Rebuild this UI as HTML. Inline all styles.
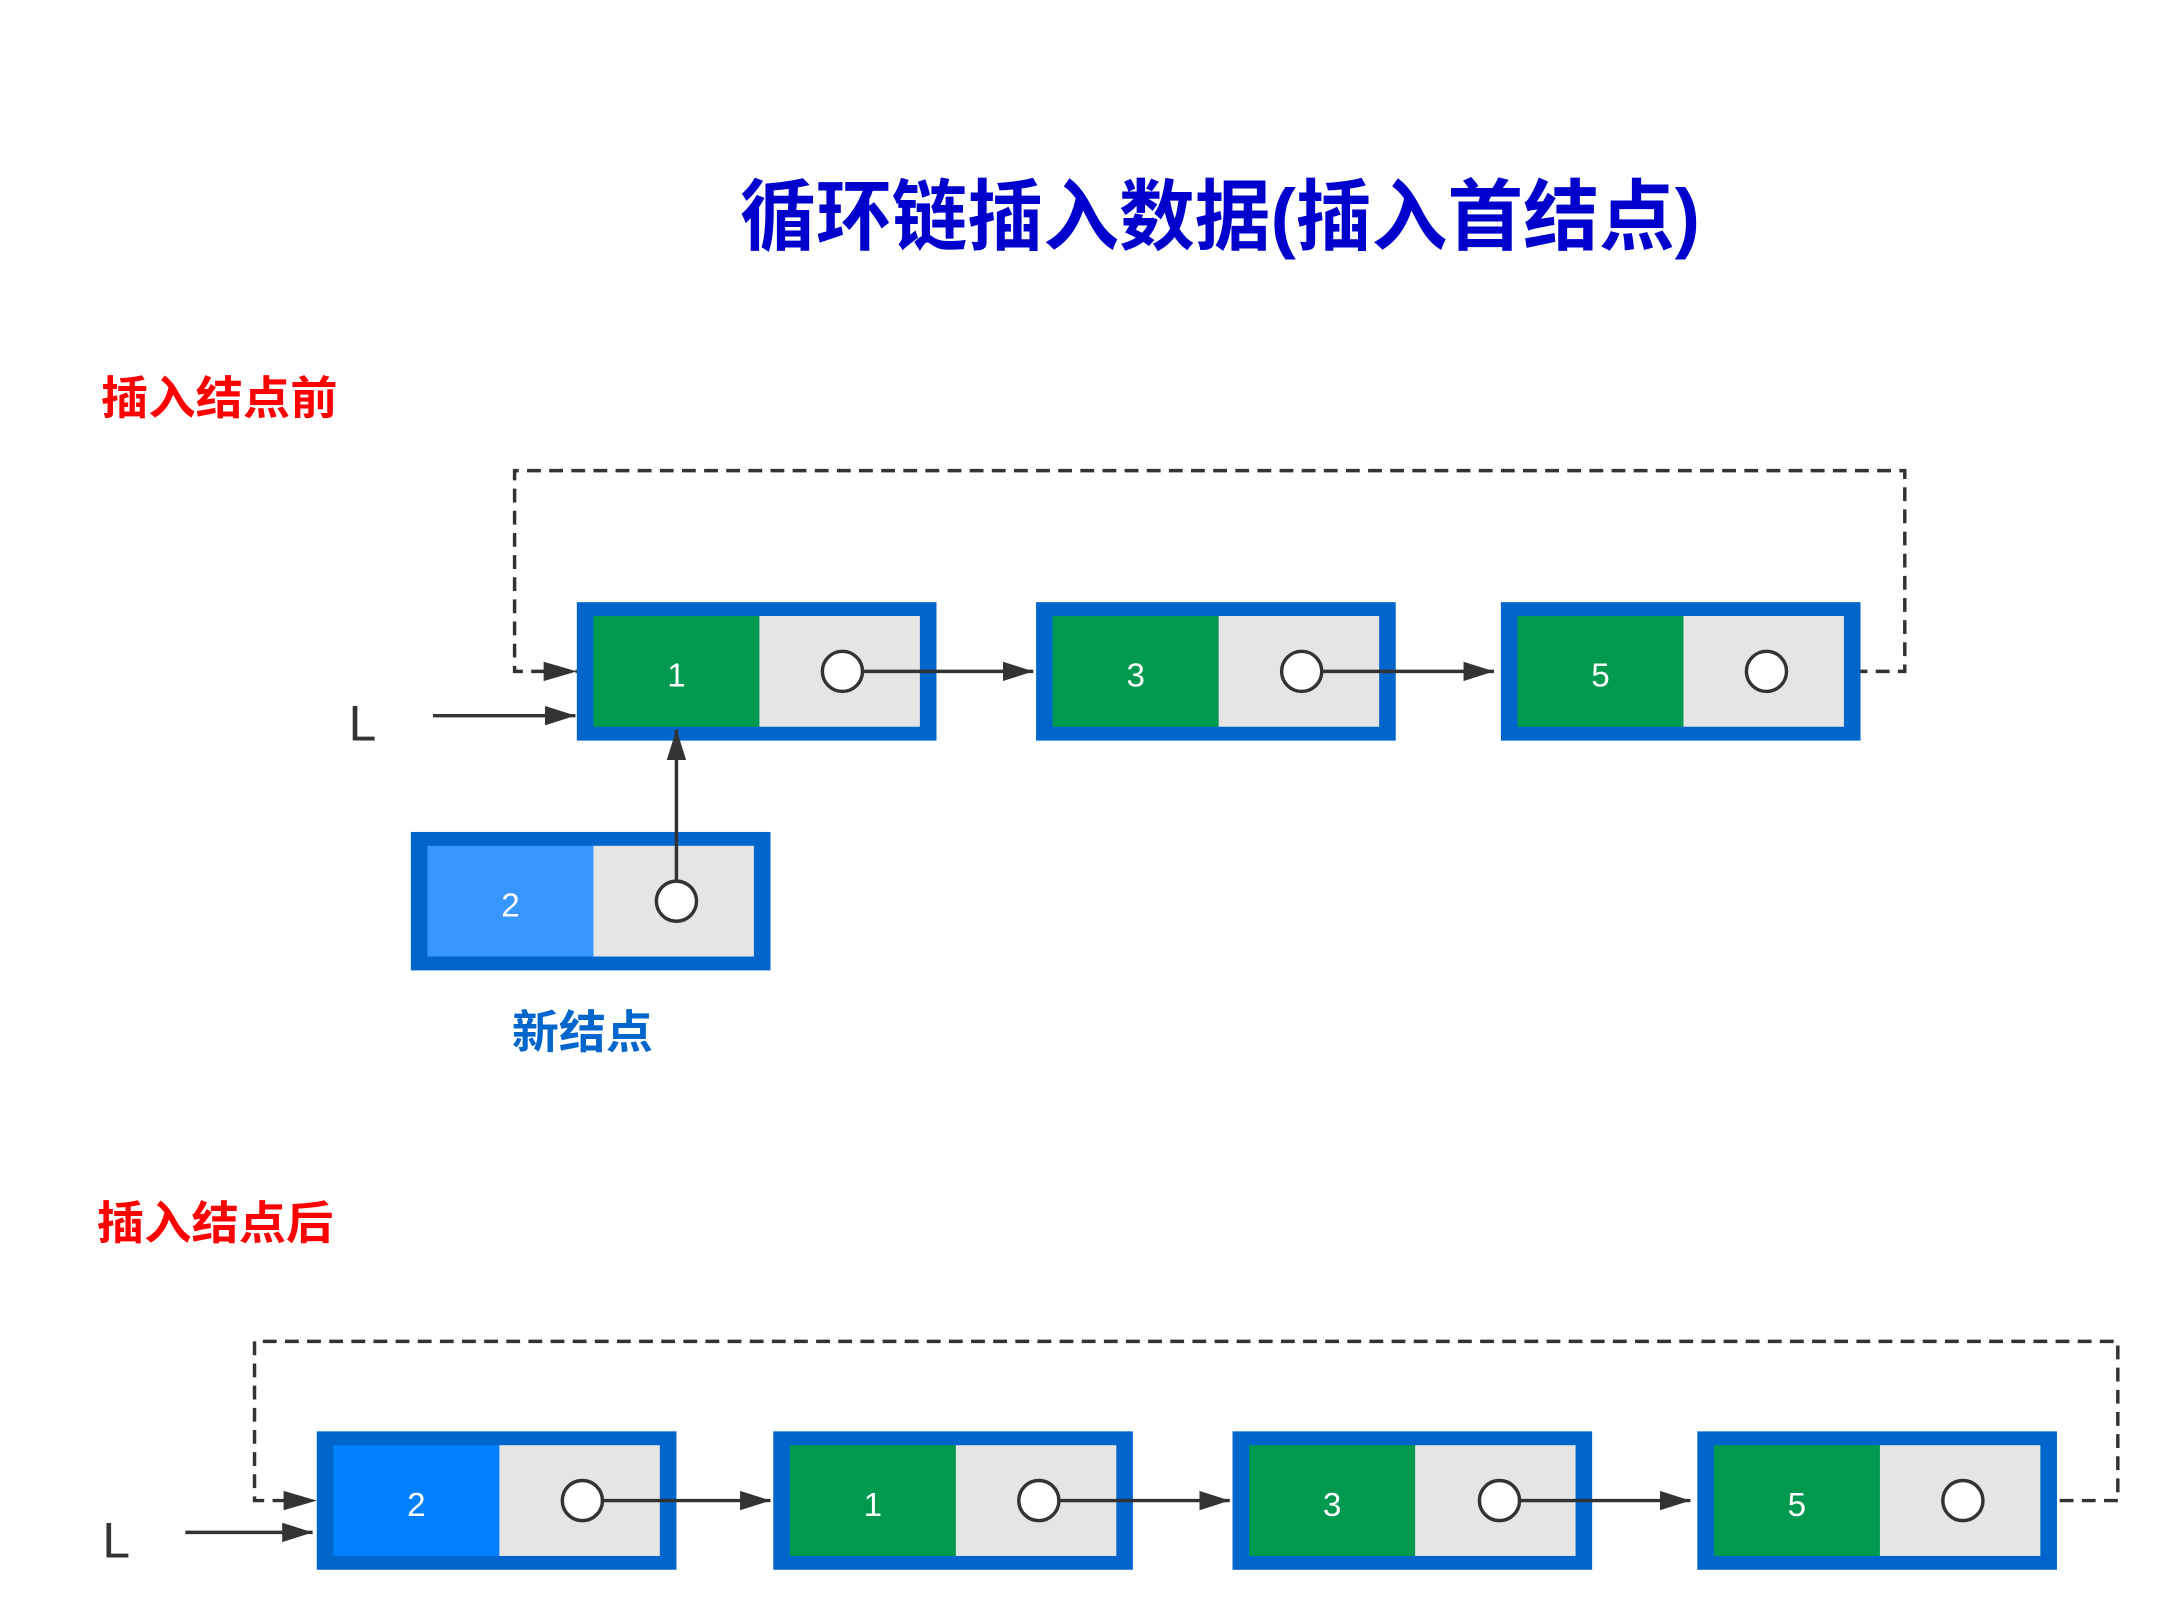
<!DOCTYPE html>
<html><head><meta charset="utf-8"><style>
html,body{margin:0;padding:0;background:#fff;}
svg{display:block;}
text{font-family:"Liberation Sans","Noto Sans CJK SC",sans-serif;}
</style></head><body>
<svg width="2169" height="1621" viewBox="0 0 1568 1171" preserveAspectRatio="none" xmlns="http://www.w3.org/2000/svg">
<defs>
<marker id="ab" markerWidth="22" markerHeight="14" refX="22" refY="7" orient="auto" markerUnits="userSpaceOnUse">
<path d="M0,0 L22,7 L0,14 Z" fill="#333"/></marker>
</defs>
<rect width="1568" height="1171" fill="#fff"/>
<text x="535" y="176" font-size="56" font-weight="bold" fill="#0000cc" textLength="694" lengthAdjust="spacingAndGlyphs" font-family="Noto Sans CJK SC, sans-serif">循环链插入数据(插入首结点)</text>
<text x="73" y="299" font-size="33" font-weight="bold" fill="#ff0000" textLength="171" lengthAdjust="spacingAndGlyphs">插入结点前</text>
<text x="70" y="895" font-size="33" font-weight="bold" fill="#ff0000" textLength="171" lengthAdjust="spacingAndGlyphs">插入结点后</text>
<text x="370" y="757" font-size="33" font-weight="bold" fill="#0066cc" textLength="102" lengthAdjust="spacingAndGlyphs">新结点</text>

<path d="M1292,485 H1377 V340 H372 V485 H417" fill="none" stroke="#333" stroke-width="2.5" stroke-dasharray="10,6" />
<path d="M393,478 L417,485 L393,492 Z" fill="#333"/>

<g>
<rect x="417" y="435" width="260" height="100" fill="#0066cc"/>
<rect x="429" y="445" width="120" height="80" fill="#009a4e"/>
<rect x="549" y="445" width="116" height="80" fill="#e5e5e5"/>
<text x="489" y="496" font-size="24" fill="#fff" text-anchor="middle">1</text>
<rect x="749" y="435" width="260" height="100" fill="#0066cc"/>
<rect x="761" y="445" width="120" height="80" fill="#009a4e"/>
<rect x="881" y="445" width="116" height="80" fill="#e5e5e5"/>
<text x="821" y="496" font-size="24" fill="#fff" text-anchor="middle">3</text>
<rect x="1085" y="435" width="260" height="100" fill="#0066cc"/>
<rect x="1097" y="445" width="120" height="80" fill="#009a4e"/>
<rect x="1217" y="445" width="116" height="80" fill="#e5e5e5"/>
<text x="1157" y="496" font-size="24" fill="#fff" text-anchor="middle">5</text>
<rect x="297" y="601" width="260" height="100" fill="#0066cc"/>
<rect x="309" y="611" width="120" height="80" fill="#3797fe"/>
<rect x="429" y="611" width="116" height="80" fill="#e5e5e5"/>
<text x="369" y="662" font-size="24" fill="#fff" text-anchor="middle">2</text>
</g>
<line x1="624" y1="485" x2="747" y2="485" stroke="#333" stroke-width="2.5" marker-end="url(#ab)"/>
<line x1="956" y1="485" x2="1080" y2="485" stroke="#333" stroke-width="2.5" marker-end="url(#ab)"/>
<line x1="489" y1="636" x2="489" y2="527" stroke="#333" stroke-width="2.5" marker-end="url(#ab)"/>
<circle cx="609" cy="485" r="14.5" fill="#fff" stroke="#333" stroke-width="2.5"/>
<circle cx="941" cy="485" r="14.5" fill="#fff" stroke="#333" stroke-width="2.5"/>
<circle cx="1277" cy="485" r="14.5" fill="#fff" stroke="#333" stroke-width="2.5"/>
<circle cx="489" cy="651" r="14.5" fill="#fff" stroke="#333" stroke-width="2.5"/>
<text x="252" y="535" font-size="36" fill="#333">L</text>
<line x1="313" y1="517" x2="416" y2="517" stroke="#333" stroke-width="2.5" marker-end="url(#ab)"/>

<path d="M1489,1084 H1531 V969 H184 V1084 H229" fill="none" stroke="#333" stroke-width="2.5" stroke-dasharray="10,6"/>
<path d="M205,1077 L229,1084 L205,1091 Z" fill="#333"/>
<rect x="229" y="1034" width="260" height="100" fill="#0066cc"/>
<rect x="241" y="1044" width="120" height="80" fill="#0080ff"/>
<rect x="361" y="1044" width="116" height="80" fill="#e5e5e5"/>
<text x="301" y="1095" font-size="24" fill="#fff" text-anchor="middle">2</text>
<rect x="559" y="1034" width="260" height="100" fill="#0066cc"/>
<rect x="571" y="1044" width="120" height="80" fill="#009a4e"/>
<rect x="691" y="1044" width="116" height="80" fill="#e5e5e5"/>
<text x="631" y="1095" font-size="24" fill="#fff" text-anchor="middle">1</text>
<rect x="891" y="1034" width="260" height="100" fill="#0066cc"/>
<rect x="903" y="1044" width="120" height="80" fill="#009a4e"/>
<rect x="1023" y="1044" width="116" height="80" fill="#e5e5e5"/>
<text x="963" y="1095" font-size="24" fill="#fff" text-anchor="middle">3</text>
<rect x="1227" y="1034" width="260" height="100" fill="#0066cc"/>
<rect x="1239" y="1044" width="120" height="80" fill="#009a4e"/>
<rect x="1359" y="1044" width="116" height="80" fill="#e5e5e5"/>
<text x="1299" y="1095" font-size="24" fill="#fff" text-anchor="middle">5</text>
<line x1="436" y1="1084" x2="557" y2="1084" stroke="#333" stroke-width="2.5" marker-end="url(#ab)"/>
<line x1="766" y1="1084" x2="889" y2="1084" stroke="#333" stroke-width="2.5" marker-end="url(#ab)"/>
<line x1="1099" y1="1084" x2="1222" y2="1084" stroke="#333" stroke-width="2.5" marker-end="url(#ab)"/>
<circle cx="421" cy="1084" r="14.5" fill="#fff" stroke="#333" stroke-width="2.5"/>
<circle cx="751" cy="1084" r="14.5" fill="#fff" stroke="#333" stroke-width="2.5"/>
<circle cx="1084" cy="1084" r="14.5" fill="#fff" stroke="#333" stroke-width="2.5"/>
<circle cx="1419" cy="1084" r="14.5" fill="#fff" stroke="#333" stroke-width="2.5"/>
<text x="74" y="1125" font-size="36" fill="#333">L</text>
<line x1="134" y1="1107" x2="226" y2="1107" stroke="#333" stroke-width="2.5" marker-end="url(#ab)"/>
</svg>
</body></html>
